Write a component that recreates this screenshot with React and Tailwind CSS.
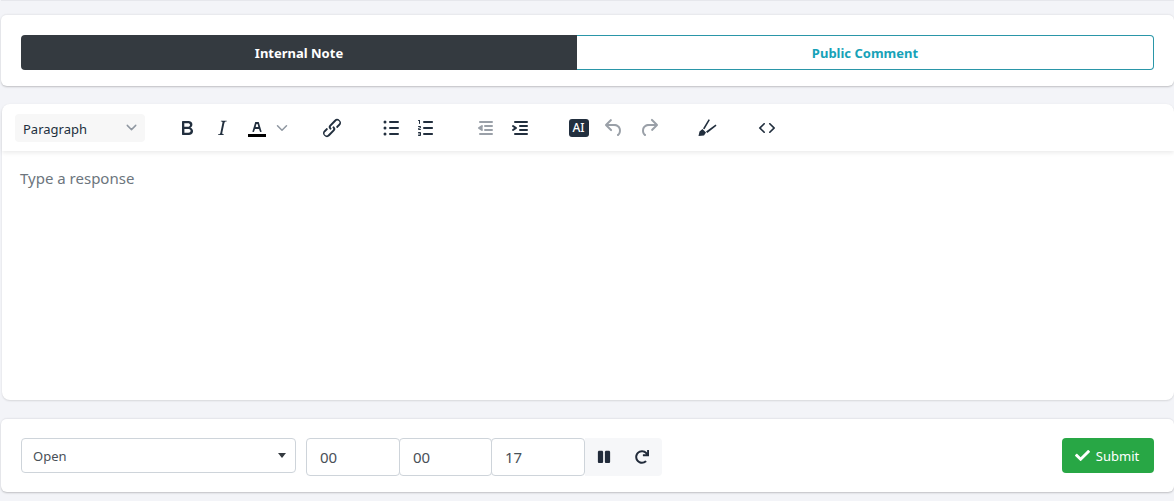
import React from "react";
import { ChevronDown } from "lucide-react";
import { FaCheck, FaPause, FaRedo } from "react-icons/fa";

const Icon = ({ d, className = "text-[#222f3e]" }) => (
  <svg viewBox="0 0 24 24" className={`w-6 h-6 fill-current ${className}`}>
    <path d={d} />
  </svg>
);

const paths = {
  bold: "M7.8 19c-.3 0-.5 0-.6-.2l-.2-.5V5.7c0-.2 0-.4.2-.5l.6-.2h5c1.5 0 2.7.3 3.5 1 .7.6 1.1 1.4 1.1 2.5a3 3 0 0 1-.6 1.9c-.4.6-1 1-1.6 1.2.4.1.9.3 1.3.6s.8.7 1 1.2c.4.4.5 1 .5 1.6 0 1.3-.4 2.3-1.3 3-.8.7-2.1 1-3.8 1H7.8zm5-8.3c.6 0 1.2-.1 1.6-.5.4-.3.6-.7.6-1.3 0-1.1-.8-1.7-2.3-1.7H9.3v3.5h3.4zm.5 6c.7 0 1.3-.1 1.7-.4.4-.4.6-.9.6-1.5s-.2-1-.7-1.4c-.4-.3-1-.4-2-.4H9.4v3.8h4z",
  italic: "M16.7 4.7l-.1.9h-.3c-.6 0-1 0-1.4.3-.3.3-.4.6-.5 1.1l-2.1 9.8v.6c0 .5.4.8 1.4.8h.2l-.2.8H8l.2-.8h.2c1.1 0 1.8-.5 2-1.5l2-9.8.1-.5c0-.6-.4-.8-1.4-.8h-.3l.2-.9h5.8z",
  letter: "M8.7 16h-.8a.5.5 0 01-.5-.6l2.7-9c.1-.3.3-.4.5-.4h2.8c.2 0 .4.1.5.4l2.7 9a.5.5 0 01-.5.6h-.8a.5.5 0 01-.4-.4l-.7-2.2c0-.3-.3-.4-.5-.4h-3.4c-.2 0-.4.1-.5.4l-.7 2.2c0 .3-.2.4-.4.4zm2.6-7.6l-.6 2a.5.5 0 00.5.6h1.6a.5.5 0 00.5-.6l-.6-2c0-.3-.3-.4-.5-.4h-.4c-.2 0-.4.1-.5.4z",
  link: "M6.2 12.3a1 1 0 0 1 1.4 1.4l-2 2a2 2 0 1 0 2.6 2.8l4.8-4.8a1 1 0 0 0 0-1.4 1 1 0 1 1 1.4-1.3 2.9 2.9 0 0 1 0 4L9.6 20a3.9 3.9 0 0 1-5.5-5.5l2-2zm11.6-.6a1 1 0 0 1-1.4-1.4l2-2a2 2 0 1 0-2.6-2.8L11 10.3a1 1 0 0 0 0 1.4A1 1 0 1 1 9.6 13a2.9 2.9 0 0 1 0-4L14.4 4a3.9 3.9 0 0 1 5.5 5.5l-2 2z",
  bullets: "M11 5h8a1 1 0 0 1 0 2h-8a1 1 0 0 1 0-2zm0 6h8a1 1 0 0 1 0 2h-8a1 1 0 0 1 0-2zm0 6h8a1 1 0 0 1 0 2h-8a1 1 0 0 1 0-2zM6 4.5a1.5 1.5 0 1 1 0 3 1.5 1.5 0 0 1 0-3zm0 6a1.5 1.5 0 1 1 0 3 1.5 1.5 0 0 1 0-3zm0 6a1.5 1.5 0 1 1 0 3 1.5 1.5 0 0 1 0-3z",
  numbers: "M10 17h8c.6 0 1 .4 1 1s-.4 1-1 1h-8a1 1 0 0 1 0-2zm0-6h8c.6 0 1 .4 1 1s-.4 1-1 1h-8a1 1 0 0 1 0-2zm0-6h8c.6 0 1 .4 1 1s-.4 1-1 1h-8a1 1 0 1 1 0-2zM6 4v3.5c0 .3-.2.5-.5.5a.5.5 0 0 1-.5-.5V5h-.5a.5.5 0 0 1 0-1H6zm-1 8.8l.2.2h1.3c.3 0 .5.2.5.5s-.2.5-.5.5H4.9a1 1 0 0 1-.9-1V13c0-.4.3-.8.6-1l1.2-.4.2-.3a.2.2 0 0 0-.2-.2H4.5a.5.5 0 0 1-.5-.5c0-.3.2-.5.5-.5h1.6c.5 0 .9.4.9 1v.1c0 .4-.3.8-.6 1l-1.2.4-.2.3zM7 17v2c0 .6-.4 1-1 1H4.5a.5.5 0 0 1 0-1h1.2c.2 0 .3-.1.3-.3 0-.2-.1-.3-.3-.3H4.4a.4.4 0 1 1 0-.8h1.3c.2 0 .3-.1.3-.3 0-.2-.1-.3-.3-.3H4.5a.5.5 0 1 1 0-1H6c.6 0 1 .4 1 1z",
  outdent: "M7 5h12a1 1 0 0 1 0 2H7a1 1 0 1 1 0-2zm5 4h7a1 1 0 0 1 0 2h-7a1 1 0 0 1 0-2zm0 4h7a1 1 0 0 1 0 2h-7a1 1 0 0 1 0-2zm-5 4h12a1 1 0 0 1 0 2H7a1 1 0 0 1 0-2zm2.6-3.8L7.8 12l1.8 1.2a1 1 0 0 1-1.2 1.6l-3-2a1 1 0 0 1 0-1.6l3-2a1 1 0 1 1 1.2 1.6z",
  indent: "M7 5h12a1 1 0 0 1 0 2H7a1 1 0 1 1 0-2zm5 4h7a1 1 0 0 1 0 2h-7a1 1 0 0 1 0-2zm0 4h7a1 1 0 0 1 0 2h-7a1 1 0 0 1 0-2zm-5 4h12a1 1 0 0 1 0 2H7a1 1 0 0 1 0-2zm-2.6-3.8L6.2 12l-1.8-1.2a1 1 0 0 1 1.2-1.6l3 2a1 1 0 0 1 0 1.6l-3 2a1 1 0 1 1-1.2-1.6z",
  undo: "M6.4 8H12c3.7 0 6.2 2 6.8 5.1.6 2.7-.4 5.6-2.3 6.8a1 1 0 0 1-1-1.8c1.1-.6 1.8-2.7 1.4-4.6-.5-2.1-2.1-3.5-4.9-3.5H6.4l3.3 3.3a1 1 0 1 1-1.4 1.4l-5-5a1 1 0 0 1 0-1.4l5-5a1 1 0 0 1 1.4 1.4L6.4 8z",
  redo: "M17.6 10H12c-2.8 0-4.4 1.4-4.9 3.5-.4 2 .3 4 1.4 4.6a1 1 0 1 1-1 1.8c-2-1.2-2.9-4.1-2.3-6.8.6-3 3-5.1 6.8-5.1h5.6l-3.3-3.3a1 1 0 1 1 1.4-1.4l5 5a1 1 0 0 1 0 1.4l-5 5a1 1 0 0 1-1.4-1.4l3.3-3.3z",
  code: "M9.8 15.7c.3.3.3.8 0 1-.3.4-.9.4-1.2 0l-4.4-4.1a.8.8 0 0 1 0-1.2l4.4-4.2c.3-.3.9-.3 1.2 0 .3.3.3.8 0 1.1L6 12l3.8 3.7zm4.4 0L18 12l-3.8-3.7a.8.8 0 0 1 0-1.1c.3-.3.9-.3 1.2 0l4.4 4.2c.3.3.3.9 0 1.2l-4.4 4.1c-.3.4-.9.4-1.2 0a.8.8 0 0 1 0-1z",
  brush: "M3.5 20l1-4.5 3-2.5 3.5 3.5-2 3zM8 12.6l5.6-9.4 1.3.8-5.4 9.2zM11 15.6l9.6-7 .9 1.2-9.2 7.2z",
};

const Btn = ({ name, className }) => (
  <div className="w-[35px] h-7 flex items-center justify-center">
    <Icon d={paths[name]} className={className} />
  </div>
);

const TimeInput = ({ value, className = "w-[94px]" }) => (
  <div className={`h-[38px] border border-[#ced4da] rounded bg-white flex items-center pl-[13px] pt-[2px] text-[15px] text-[#495057] ${className}`}>
    {value}
  </div>
);

export default function App() {
  return (
    <div className="w-[1174px] h-[501px] overflow-hidden bg-[#f3f4f8] pl-px text-[#212529] font-['Noto_Sans','Open_Sans',sans-serif] text-sm">
      <div className="h-px bg-[#e6e7ec]" />

      <div className="mt-[13px] h-[72px] bg-white rounded-md border-t border-[#e9eaee] shadow-[0_1px_2px_rgba(0,0,0,0.22)] px-5 pt-5">
        <div className="flex h-[35px] font-bold text-[13px]">
          <div className="w-[556px] bg-[#343a40] rounded-l text-white flex items-center justify-center pt-[2px]">
            Internal Note
          </div>
          <div className="flex-1 border border-l-0 border-[#2a96a8] rounded-r text-[#17a2b8] flex items-center justify-center pt-[2px]">
            Public Comment
          </div>
        </div>
      </div>

      <div className="mt-[18px] h-[296px] ml-[1px] bg-white rounded-lg shadow-[0_1px_2px_rgba(0,0,0,0.12)] flex flex-col">
        <div className="h-[47px] shrink-0 flex items-center pl-[13px] shadow-[0_2px_4px_rgba(0,0,0,0.08)] rounded-t-lg">
          <div className="w-[130px] h-7 bg-[#f7f7f7] rounded flex items-center justify-between pl-2 pr-[5px] pt-[4px] text-[13px] text-[#222f3e]">
            Paragraph
            <ChevronDown className="w-[17px] h-[17px] text-[#8f97a1] -mt-[4px]" strokeWidth={2} />
          </div>
          <div className="flex ml-[24px]">
            <Btn name="bold" />
            <Btn name="italic" />
            <div className="w-[58px] h-7 flex items-center pl-[6px]">
              <svg viewBox="0 0 24 24" className="w-6 h-6 text-[#222f3e] fill-current shrink-0">
                <path d={paths.letter} />
                <path d="M3 18h18v3H3z" fill="#000" />
              </svg>
              <ChevronDown className="w-[18px] h-[18px] text-[#8f97a1] ml-1" strokeWidth={2} />
            </div>
          </div>
          <div className="ml-[17px]">
            <Btn name="link" />
          </div>
          <div className="flex ml-[24px]">
            <Btn name="bullets" />
            <Btn name="numbers" />
          </div>
          <div className="flex ml-[24px]">
            <Btn name="outdent" className="text-[#9aa0a8]" />
            <Btn name="indent" />
          </div>
          <div className="flex ml-[24px]">
            <div className="w-[35px] h-7 flex items-center justify-center">
              <div className="w-5 h-[18px] rounded-[3px] bg-[#222f3e] text-white text-[12px] font-medium flex items-center justify-center">
                AI
              </div>
            </div>
            <Btn name="undo" className="text-[#9aa0a8]" />
            <Btn name="redo" className="text-[#9aa0a8]" />
          </div>
          <div className="ml-[23px]">
            <Btn name="brush" />
          </div>
          <div className="ml-[25px]">
            <Btn name="code" />
          </div>
        </div>
        <div className="pl-[18px] pt-[17px] text-[15px] leading-[20px] text-[#6c757d]">Type a response</div>
      </div>

      <div className="mt-[18px] h-[74px] bg-white rounded-md border-t border-[#e6e7ec] shadow-[0_1px_2px_rgba(0,0,0,0.22)] px-5 pt-[19px] flex items-start justify-between">
        <div className="flex items-start">
          <div className="relative w-[275px] h-[35px] border border-[#ced4da] rounded bg-white flex items-center pl-[11px] pt-[2px] text-[13px] text-[#495057] mr-[10px]">
            Open
            <span className="absolute right-[9px] top-[14px] w-0 h-0 border-x-[4px] border-x-transparent border-t-[5px] border-t-[#343a40]" />
          </div>
          <TimeInput value="00" />
          <TimeInput value="00" className="w-[93px] -ml-px" />
          <TimeInput value="17" className="w-[94px] -ml-px" />
          <div className="w-[77px] h-[38px] bg-[#f6f7f9] rounded-r flex items-center text-[#212b3a]">
            <div className="w-[38px] flex justify-center">
              <FaPause className="w-[14px] h-[14px]" />
            </div>
            <div className="w-[38px] flex justify-center">
              <FaRedo className="w-[14px] h-[14px]" />
            </div>
          </div>
        </div>
        <div className="w-[92px] h-[35px] bg-[#28a745] rounded text-white text-[13px] flex items-center justify-center gap-[6px] pt-[2px] pr-[2px]">
          <FaCheck className="w-[15px] h-[15px] -mt-[2px]" />
          Submit
        </div>
      </div>
    </div>
  );
}
